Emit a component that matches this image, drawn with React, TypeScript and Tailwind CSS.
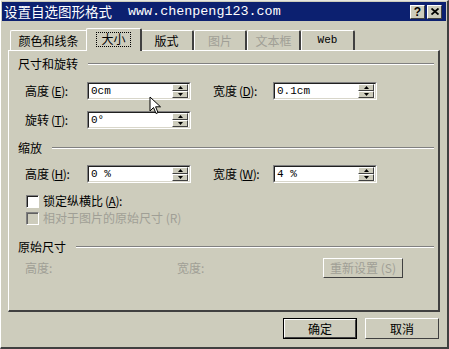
import type { ReactNode } from 'react'

const cjk = "font-['Noto_Sans_CJK_SC','Liberation_Sans',sans-serif]"
const mono = "font-['Liberation_Mono','Noto_Sans_CJK_SC',monospace]"

function Key({ k }: { k: string }) {
  return (
    <span className="tracking-[-0.5px] ml-[2px]">
      (<span className="underline underline-offset-[1px]">{k}</span>):
    </span>
  )
}

function Spinner() {
  return (
    <div className="flex flex-col w-[16px] h-[14px] gap-0">
      <div className="flex-1 bg-[#cdccbc] border-t border-l border-t-white border-l-white border-b border-r border-b-[#404040] border-r-[#404040] flex items-center justify-center">
        <svg width="5" height="3" viewBox="0 0 5 3"><path d="M2.5 0 L5 3 L0 3 Z" fill="#000" /></svg>
      </div>
      <div className="flex-1 bg-[#cdccbc] border-t border-l border-t-white border-l-white border-b border-r border-b-[#404040] border-r-[#404040] flex items-center justify-center">
        <svg width="5" height="3" viewBox="0 0 5 3"><path d="M0 0 L5 0 L2.5 3 Z" fill="#000" /></svg>
      </div>
    </div>
  )
}

function SpinInput({ value }: { value: string }) {
  return (
    <div className="w-[104px] h-[18px] border border-t-[#808080] border-l-[#808080] border-b-white border-r-white">
      <div className="w-full h-full bg-white border border-t-[#202020] border-l-[#202020] border-b-[#d8d6ca] border-r-[#d8d6ca] flex items-center justify-between pr-[1px]">
        <span className={`${mono} text-[11px] leading-none pl-[2px] text-black`}>{value}</span>
        <Spinner />
      </div>
    </div>
  )
}

function Section({ title, children }: { title: string; children?: ReactNode }) {
  return (
    <div className="flex items-center h-[14px] pl-[9px] pr-[4px]">
      <span className={`${cjk} text-[12px] leading-none text-black`}>{title}</span>
      <div className="flex-1 ml-[10px] border-t border-t-[#808080] border-b border-b-white" />
      {children}
    </div>
  )
}

function Field({ label, k, value, w = 62 }: { label: string; k: string; value: string; w?: number }) {
  return (
    <div className="flex items-center">
      <div className={`${cjk} text-[12px] leading-none text-black`} style={{ width: w }}>
        {label}
        <Key k={k} />
      </div>
      <SpinInput value={value} />
    </div>
  )
}

const tabs = [
  { label: '颜色和线条', w: 78 },
  { label: '大小', w: 52, active: true },
  { label: '版式', w: 54 },
  { label: '图片', w: 53, disabled: true },
  { label: '文本框', w: 54, disabled: true },
  { label: 'Web', w: 54, web: true },
]

export default function App() {
  return (
    <div className={`w-[449px] h-[349px] bg-[#cdccbc] overflow-hidden relative border-l border-t border-l-white border-t-[#e8e8e0] border-r-2 border-b-2 border-r-[#404040] border-b-[#404040] ${cjk}`}>
      {/* title bar */}
      <div className="mx-[1px] mt-[1px] h-[19px] bg-[#0c2070] flex items-center justify-between pl-[2px] pr-[4px]">
        <div className="flex items-center text-white whitespace-nowrap">
          <span className={`${cjk} text-[13.5px] leading-none`}>设置自选图形格式</span>
          <span className={`${mono} text-[13.4px] leading-none ml-[16px]`}>www.chenpeng123.com</span>
        </div>
        <div className="flex gap-[2px]">
          {['?', '×'].map((c) => (
            <div key={c} className="w-[15px] h-[14px] bg-[#cdccbc] border border-t-white border-l-white border-b-[#404040] border-r-[#404040] flex items-center justify-center text-[12px] font-bold leading-none text-black font-['Liberation_Sans',sans-serif]">
              {c === '×' ? (
                <svg width="8" height="7" viewBox="0 0 8 7"><path d="M0.5 0.5 L7.5 6.5 M7.5 0.5 L0.5 6.5" stroke="#000" strokeWidth="1.8" /></svg>
              ) : c}
            </div>
          ))}
        </div>
      </div>

      <div className="px-[7px] pt-[8px]">
        {/* tabs */}
        <div className="flex items-end h-[21px] pl-[2px]">
          {tabs.map((t) =>
            t.active ? (
              <div key={t.label} className="relative z-10 -mx-[2px] h-[23px] -mb-[1px] bg-[#cdccbc] border-t border-l border-t-white border-l-white border-r-2 border-r-[#404040] rounded-t-[2px] flex items-center justify-center pb-[2px]" style={{ width: t.w + 4 }}>
                <span className="border border-dotted border-black px-[4px] h-[15px] flex items-center text-[12px] leading-none text-black">{t.label}</span>
              </div>
            ) : (
              <div key={t.label} className={`h-[20px] border-t border-l border-t-white border-l-white border-r-2 border-r-[#404040] rounded-t-[2px] flex items-center justify-center leading-none ${t.disabled ? 'text-[#a09f96]' : 'text-black'} ${t.web ? `${mono} text-[11px]` : 'text-[12px]'}`} style={{ width: t.w }}>
                {t.label}
              </div>
            )
          )}
        </div>

        {/* panel */}
        <div className="h-[262px] border-t border-l border-t-white border-l-white border-r-2 border-b-2 border-r-[#404040] border-b-[#404040] pt-[6px]">
          <Section title="尺寸和旋转" />
          <div className="pl-[16px]">
            <div className="flex items-center mt-[11px] gap-[22px]">
              <Field label="高度" k="E" value="0cm" />
              <Field label="宽度" k="D" value="0.1cm" w={60} />
            </div>
            <div className="mt-[11px]">
              <Field label="旋转" k="T" value="0°" />
            </div>
          </div>

          <div className="mt-[12px]">
            <Section title="缩放" />
          </div>
          <div className="pl-[16px]">
            <div className="flex items-center mt-[10px] gap-[22px]">
              <Field label="高度" k="H" value="0 %" />
              <Field label="宽度" k="W" value="4 %" w={60} />
            </div>
            <div className="flex items-center mt-[11px] h-[14px] pl-[1px]">
              <div className="w-[13px] h-[13px] bg-white border border-t-[#808080] border-l-[#808080] border-b-white border-r-white shadow-[inset_1px_1px_0_#202020]" />
              <span className="ml-[4px] text-[12px] leading-none text-black">锁定纵横比<Key k="A" /></span>
            </div>
            <div className="flex items-center mt-[3px] h-[14px] pl-[1px]">
              <div className="w-[13px] h-[13px] bg-[#cdccbc] border border-t-[#808080] border-l-[#808080] border-b-white border-r-white shadow-[inset_1px_1px_0_#606060]" />
              <span className="ml-[4px] text-[12px] leading-none text-[#a09f96]">相对于图片的原始尺寸 (R)</span>
            </div>
          </div>

          <div className="mt-[15px]">
            <Section title="原始尺寸" />
          </div>
          <div className="flex items-center pl-[16px] mt-[4px] h-[20px] text-[12px] leading-none text-[#a09f96]">
            <span className="w-[152px]">高度:</span>
            <span className="w-[146px]">宽度:</span>
            <div className="w-[80px] h-[20px] border border-t-white border-l-white border-b-[#404040] border-r-[#404040] flex items-center justify-center">
              重新设置 (S)
            </div>
          </div>
        </div>

        {/* dialog buttons */}
        <div className="flex justify-end gap-[8px] mt-[6px] pr-[1px]">
          <div className="w-[74px] h-[21px] border border-black">
            <div className="w-full h-full border border-t-white border-l-white border-b-[#404040] border-r-[#404040] flex items-center justify-center text-[12px] leading-none text-black">确定</div>
          </div>
          <div className="w-[74px] h-[21px] border border-t-white border-l-white border-b-[#404040] border-r-[#404040] flex items-center justify-center text-[12px] leading-none text-black">取消</div>
        </div>
      </div>

      {/* mouse cursor */}
      <svg className="absolute left-[148px] top-[95px]" width="13" height="20" viewBox="0 0 13 20">
        <path d="M1 1 L1 15 L4.5 11.5 L7 17.5 L9 16.6 L6.6 10.8 L11.5 10.8 Z" fill="#fff" stroke="#000" strokeWidth="1" strokeLinejoin="miter" />
      </svg>
    </div>
  )
}
